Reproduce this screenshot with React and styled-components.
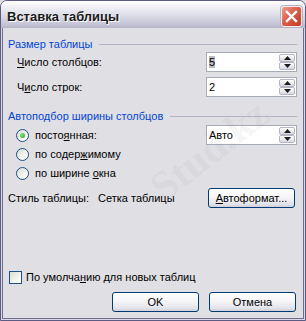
import React from "react";
import styled, { createGlobalStyle } from "styled-components";

const GlobalStyle = createGlobalStyle`
  html, body {
    margin: 0;
    padding: 0;
    background: #e0dfe3;
  }
  body {
    font-family: "Liberation Sans", Arial, sans-serif;
    font-size: 11px;
    color: #000;
  }
`;

const Window = styled.div`
  position: relative;
  width: 306px;
  height: 321px;
  box-sizing: border-box;
  border: 1px solid #5c5b84;
  border-radius: 7px 7px 0 0;
  background: #d9d8e4;
  display: flex;
  flex-direction: column;
  overflow: hidden;
`;

const TitleBar = styled.div`
  height: 27px;
  box-sizing: border-box;
  padding: 4px 3px 0 6px;
  display: flex;
  align-items: center;
  background: linear-gradient(
    to bottom,
    #ffffff 0%,
    #eeeef4 25%,
    #d8d8e4 60%,
    #c4c3d5 88%,
    #b4b3c8 100%
  );
`;

const Title = styled.div`
  flex: 1;
  font-family: "Liberation Sans", Arial, sans-serif;
  font-weight: bold;
  font-size: 13px;
  color: #1a1a1a;
  text-shadow: 1px 1px 0 #ffffff;
`;

const CloseButton = styled.div`
  width: 21px;
  height: 21px;
  box-sizing: border-box;
  border: 1px solid #f4eeee;
  border-radius: 3px;
  background: linear-gradient(135deg, #eda08f 0%, #d9604a 45%, #c23b26 100%);
  box-shadow: 0 0 0 1px #b8b0c0;
  display: flex;
  align-items: center;
  justify-content: center;
`;

const Body = styled.div`
  flex: 1;
  margin: 0 1px 1px 1px;
  border: 1px solid #6e6d91;
  border-top: none;
  background: #e0dfe3;
  padding: 10px 6px 6px 5px;
  display: flex;
  flex-direction: column;
`;

const GroupHeader = styled.div`
  height: 13px;
  display: flex;
  align-items: center;
  gap: 7px;
  color: #0046d5;
  margin-top: ${(p) => p.$top || 0}px;
  line-height: 13px;
`;

const Rule = styled.div`
  flex: 1;
  height: 1px;
  margin-top: -1px;
  background: #b4b3c4;
`;

const FieldRow = styled.div`
  height: 20px;
  display: flex;
  align-items: center;
  margin-top: ${(p) => p.$top || 0}px;
`;

const FieldLabel = styled.div`
  padding-left: ${(p) => p.$indent || 0}px;
  line-height: 13px;
  white-space: nowrap;
`;

const SpinBox = styled.div`
  margin-left: auto;
  width: 91px;
  height: 20px;
  box-sizing: border-box;
  border: 1px solid #a5acb5;
  background: #fff;
  display: flex;
  align-items: center;
`;

const SpinValue = styled.div`
  flex: 1;
  padding-left: 2px;
  line-height: 13px;
`;

const Selected = styled.span`
  background: #bcbcc6;
`;

const SpinButtons = styled.div`
  width: 16px;
  height: 16px;
  margin: 0 1px;
  display: flex;
  flex-direction: column;
`;

const SpinArrow = styled.div`
  flex: 1;
  box-sizing: border-box;
  border: 1px solid #b6b5c6;
  border-radius: 2px;
  background: linear-gradient(to bottom, #ffffff, #d7d7e2);
  display: flex;
  align-items: center;
  justify-content: center;
`;

const RadioRow = styled.div`
  height: ${(p) => p.$h || 19}px;
  display: flex;
  align-items: center;
  margin-top: ${(p) => p.$top || 0}px;
  padding-left: 8px;
`;

const Radio = styled.div`
  width: 13px;
  height: 13px;
  box-sizing: border-box;
  border-radius: 50%;
  border: 1px solid #1c5180;
  background: linear-gradient(135deg, #dcdcd6 0%, #f4f4f0 60%, #ffffff 100%);
  margin-right: 6px;
  display: flex;
  align-items: center;
  justify-content: center;
  flex-shrink: 0;

  &::after {
    content: "";
    display: ${(p) => (p.$checked ? "block" : "none")};
    width: 5px;
    height: 5px;
    border-radius: 50%;
    background: radial-gradient(circle at 35% 35%, #7ee37e, #21a121);
  }
`;

const PushButton = styled.div`
  width: 87px;
  height: 20px;
  box-sizing: border-box;
  border: 1px solid #003c74;
  border-radius: 3px;
  background: linear-gradient(to bottom, #ffffff 0%, #f4f4f6 50%, #e2e2ea 85%, #cfcfdc 100%);
  display: flex;
  align-items: center;
  justify-content: center;
  line-height: 13px;
  margin-left: ${(p) => p.$left || 0}px;
`;

const StyleValue = styled.div`
  margin-left: 9px;
  line-height: 13px;
`;

const CheckRow = styled.div`
  margin-top: auto;
  height: 13px;
  display: flex;
  align-items: center;
  padding-left: 1px;
`;

const Checkbox = styled.div`
  width: 13px;
  height: 13px;
  box-sizing: border-box;
  border: 1px solid #1c5180;
  background: linear-gradient(135deg, #dcdcd6 0%, #f4f4f0 60%, #ffffff 100%);
  margin-right: 4px;
`;

const ButtonRow = styled.div`
  margin-top: 8px;
  height: 20px;
  display: flex;
  justify-content: flex-end;
  padding-right: 1px;
`;

const Watermark = styled.div`
  position: absolute;
  left: 140px;
  top: 125px;
  transform: rotate(-38deg);
  font-family: "Liberation Serif", serif;
  font-weight: bold;
  font-size: 42px;
  color: rgba(120, 120, 135, 0.08);
  pointer-events: none;
  white-space: nowrap;
`;

function Arrow({ down }) {
  return (
    <svg width="7" height="4" viewBox="0 0 7 4">
      <path d={down ? "M0 0H7L3.5 4Z" : "M0 4H7L3.5 0Z"} fill="#1b1b1b" />
    </svg>
  );
}

function Spin({ children }) {
  return (
    <SpinBox>
      <SpinValue>{children}</SpinValue>
      <SpinButtons>
        <SpinArrow>
          <Arrow />
        </SpinArrow>
        <SpinArrow>
          <Arrow down />
        </SpinArrow>
      </SpinButtons>
    </SpinBox>
  );
}

export default function App() {
  return (
    <>
      <GlobalStyle />
      <Window>
        <TitleBar>
          <Title>Вставка таблицы</Title>
          <CloseButton>
            <svg width="13" height="13" viewBox="0 0 13 13">
              <path
                d="M2 2L11 11M11 2L2 11"
                stroke="#ffffff"
                strokeWidth="2.4"
                strokeLinecap="square"
              />
            </svg>
          </CloseButton>
        </TitleBar>
        <Body>
          <GroupHeader>
            <span>Размер таблицы</span>
            <Rule />
          </GroupHeader>
          <FieldRow $top={1}>
            <FieldLabel $indent={9}>
              <u>Ч</u>исло столбцов:
            </FieldLabel>
            <Spin>
              <Selected>5</Selected>
            </Spin>
          </FieldRow>
          <FieldRow $top={5}>
            <FieldLabel $indent={9}>
              Ч<u>и</u>сло строк:
            </FieldLabel>
            <Spin>2</Spin>
          </FieldRow>

          <GroupHeader $top={13}>
            <span>Автоподбор ширины столбцов</span>
            <Rule />
          </GroupHeader>
          <RadioRow $top={2} $h={20}>
            <Radio $checked />
            <FieldLabel>
              посто<u>я</u>нная:
            </FieldLabel>
            <Spin>Авто</Spin>
          </RadioRow>
          <RadioRow>
            <Radio />
            <FieldLabel>
              по содер<u>ж</u>имому
            </FieldLabel>
          </RadioRow>
          <RadioRow>
            <Radio />
            <FieldLabel>
              по ширине <u>о</u>кна
            </FieldLabel>
          </RadioRow>

          <FieldRow $top={5}>
            <FieldLabel>Стиль таблицы:</FieldLabel>
            <StyleValue>Сетка таблицы</StyleValue>
            <PushButton style={{ marginLeft: "auto", marginRight: 2 }}>
              <span>
                <u>А</u>втоформат...
              </span>
            </PushButton>
          </FieldRow>

          <CheckRow>
            <Checkbox />
            <FieldLabel>
              По умолча<u>н</u>ию для новых таблиц
            </FieldLabel>
          </CheckRow>
          <ButtonRow>
            <PushButton>OK</PushButton>
            <PushButton $left={10}>Отмена</PushButton>
          </ButtonRow>
        </Body>
        <Watermark>Stud.kz</Watermark>
      </Window>
    </>
  );
}
